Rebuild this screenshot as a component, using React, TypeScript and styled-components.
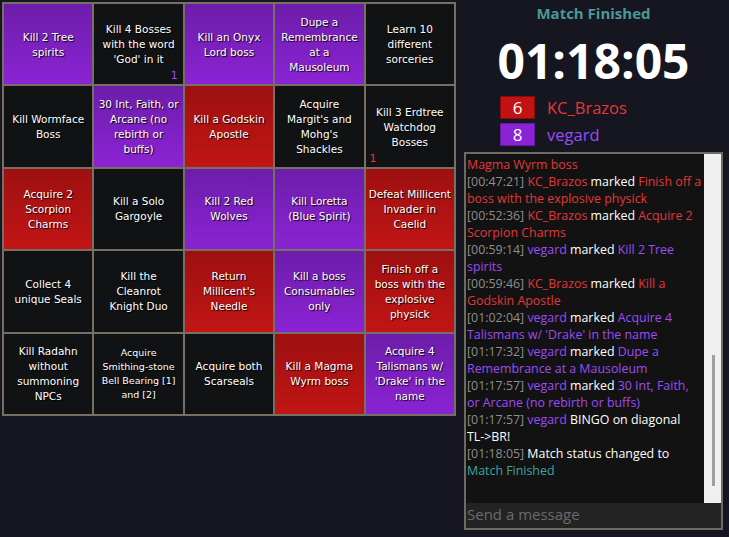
import React from 'react';
import styled, { createGlobalStyle, css } from 'styled-components';

type Team = 'red' | 'purple' | 'none';

interface IGoal {
    text: string;
    team: Team;
    small?: boolean;
    marker?: { team: Team; side: 'left' | 'right' };
}

const GlobalStyle = createGlobalStyle`
    html, body {
        margin: 0;
        padding: 0;
        background-color: #15161f;
        height: 100%;
    }
    * {
        box-sizing: border-box;
    }
`;

const teamFill = {
    red: css`
        background: linear-gradient(#9d1010, #c21515);
    `,
    purple: css`
        background: linear-gradient(#6c1daa, #8b23d4);
    `,
    none: css`
        background: #111213;
    `,
};

const teamText = {
    red: '#e23838',
    purple: '#9c4cf7',
    none: '#ffffff',
};

const Page = styled.div`
    display: flex;
    height: 537px;
    padding: 2px 0 0 2px;
`;

const Board = styled.div`
    display: grid;
    grid-template-columns: repeat(5, 1fr);
    grid-template-rows: repeat(5, 1fr);
    gap: 2px;
    padding: 2px;
    width: 454px;
    height: 414px;
    background-color: #776f63;
`;

const Cell = styled.div<{ $team: Team }>`
    position: relative;
    display: flex;
    align-items: center;
    justify-content: center;
    padding: 1px 2.8px 0;
    ${(p) => teamFill[p.$team]}
`;

const CellLabel = styled.div<{ $small?: boolean }>`
    font-family: 'DejaVu Sans', Verdana, sans-serif;
    font-size: ${(p) => (p.$small ? '9.5px' : '10.5px')};
    line-height: ${(p) => (p.$small ? '14px' : '15px')};
    color: #ffffff;
    text-align: center;
    white-space: pre-line;
    text-shadow: 1px 1px 1px #000;
`;

const Marker = styled.span<{ $team: Team; $side: 'left' | 'right' }>`
    position: absolute;
    bottom: 1px;
    ${(p) => (p.$side === 'left' ? 'left: 4px;' : 'right: 5px;')}
    font-family: 'DejaVu Sans', Verdana, sans-serif;
    font-size: 11px;
    line-height: 14px;
    color: ${(p) => teamText[p.$team]};
`;

const Side = styled.div`
    flex: 1;
    display: flex;
    flex-direction: column;
    align-items: stretch;
    padding: 0 6px 7px 8px;
    margin-top: -2px;
    font-family: 'Open Sans', 'Noto Sans', sans-serif;
`;

const Status = styled.div`
    padding-top: 3px;
    font-size: 15px;
    line-height: 20px;
    font-weight: 700;
    color: #4b9898;
    text-align: center;
`;

const Timer = styled.div`
    margin-top: 10px;
    font-size: 48px;
    line-height: 56px;
    font-weight: 700;
    color: #ffffff;
    text-align: center;
`;

const Scores = styled.div`
    display: flex;
    flex-direction: column;
    gap: 4px;
    margin-top: 7px;
    padding-left: 36px;
`;

const ScoreRow = styled.div`
    display: flex;
    align-items: center;
    gap: 12px;
`;

const ScoreBox = styled.div<{ $team: Team }>`
    width: 35px;
    height: 23px;
    display: flex;
    align-items: center;
    justify-content: center;
    font-size: 17px;
    color: #ffffff;
    background-color: ${(p) => (p.$team === 'red' ? '#c11313' : '#8a22d5')};
    border: 1px solid ${(p) => (p.$team === 'red' ? '#860c0c' : '#651aa3')};
`;

const ScoreName = styled.div<{ $team: Team }>`
    font-size: 16.5px;
    color: ${(p) => teamText[p.$team]};
`;

const ChatBox = styled.div`
    flex: 1;
    display: flex;
    flex-direction: column;
    margin-top: 6px;
    border: 2px solid #6f6a60;
    background-color: #121212;
    min-height: 0;
`;

const LogRow = styled.div`
    flex: 1;
    display: flex;
    min-height: 0;
`;

const Log = styled.div`
    flex: 1;
    display: flex;
    flex-direction: column;
    justify-content: flex-end;
    overflow: hidden;
    padding: 0 0 24px 1px;
    font-size: 12.4px;
    line-height: 17px;
    color: #ffffff;
`;

const Message = styled.div``;

const Stamp = styled.span`
    color: #8e8e8e;
`;

const Colored = styled.span<{ $team: Team | 'status' }>`
    color: ${(p) => (p.$team === 'status' ? '#3fa3a0' : teamText[p.$team])};
`;

const NoWrap = styled.span`
    white-space: nowrap;
`;

const Track = styled.div`
    width: 17px;
    display: flex;
    flex-direction: column;
    justify-content: flex-end;
    padding: 0 0 17px 8px;
    background-color: #f0f0f0;
`;

const Thumb = styled.div`
    width: 3px;
    height: 131px;
    background-color: #a0a0a0;
`;

const ChatInput = styled.input`
    height: 25px;
    border: none;
    outline: none;
    padding: 0 1px 3px;
    background-color: #232323;
    color: #ffffff;
    font-family: 'Open Sans', 'Noto Sans', sans-serif;
    font-size: 15px;

    &::placeholder {
        color: #6b6b6b;
    }
`;

const goals: IGoal[] = [
    { text: 'Kill 2 Tree spirits', team: 'purple' },
    { text: "Kill 4 Bosses with the word 'God' in it", team: 'none', marker: { team: 'purple', side: 'right' } },
    { text: 'Kill an Onyx Lord boss', team: 'purple' },
    { text: 'Dupe a Remembrance at a Mausoleum', team: 'purple' },
    { text: 'Learn 10 different sorceries', team: 'none' },
    { text: 'Kill Wormface Boss', team: 'none' },
    { text: '30 Int, Faith, or Arcane (no rebirth or\nbuffs)', team: 'purple' },
    { text: 'Kill a Godskin Apostle', team: 'red' },
    { text: "Acquire Margit's and Mohg's Shackles", team: 'none' },
    { text: 'Kill 3 Erdtree Watchdog Bosses', team: 'none', marker: { team: 'red', side: 'left' } },
    { text: 'Acquire 2 Scorpion Charms', team: 'red' },
    { text: 'Kill a Solo Gargoyle', team: 'none' },
    { text: 'Kill 2 Red Wolves', team: 'purple' },
    { text: 'Kill Loretta (Blue Spirit)', team: 'purple' },
    { text: 'Defeat Millicent Invader in Caelid', team: 'red' },
    { text: 'Collect 4 unique Seals', team: 'none' },
    { text: 'Kill the Cleanrot\nKnight Duo', team: 'none' },
    { text: "Return Millicent's Needle", team: 'red' },
    { text: 'Kill a boss Consumables only', team: 'purple' },
    { text: 'Finish off a boss with the explosive physick', team: 'red' },
    { text: 'Kill Radahn without summoning NPCs', team: 'none' },
    { text: 'Acquire Smithing-stone Bell Bearing [1] and [2]', team: 'none', small: true },
    { text: 'Acquire both Scarseals', team: 'none' },
    { text: 'Kill a Magma Wyrm boss', team: 'red' },
    { text: "Acquire 4 Talismans w/ 'Drake' in the name", team: 'purple' },
];

const players: Record<string, Team> = { KC_Brazos: 'red', vegard: 'purple' };

const marks = [
    ['00:44:12', 'KC_Brazos', 'Kill a Magma Wyrm boss'],
    ['00:47:21', 'KC_Brazos', 'Finish off a boss with the explosive physick'],
    ['00:52:36', 'KC_Brazos', 'Acquire 2 Scorpion Charms'],
    ['00:59:14', 'vegard', 'Kill 2 Tree spirits'],
    ['00:59:46', 'KC_Brazos', 'Kill a Godskin Apostle'],
    ['01:02:04', 'vegard', "Acquire 4 Talismans w/ 'Drake' in the name"],
    ['01:17:32', 'vegard', 'Dupe a Remembrance at a Mausoleum'],
    ['01:17:57', 'vegard', '30 Int, Faith, or Arcane (no rebirth or buffs)'],
];

const App: React.FC = () => {
    return (
        <Page>
            <GlobalStyle />
            <Board>
                {goals.map((goal, index) => (
                    <Cell key={index} $team={goal.team}>
                        <CellLabel $small={goal.small}>{goal.text}</CellLabel>
                        {goal.marker && (
                            <Marker $team={goal.marker.team} $side={goal.marker.side}>
                                1
                            </Marker>
                        )}
                    </Cell>
                ))}
            </Board>
            <Side>
                <Status>Match Finished</Status>
                <Timer>01:18:05</Timer>
                <Scores>
                    <ScoreRow>
                        <ScoreBox $team="red">6</ScoreBox>
                        <ScoreName $team="red">KC_Brazos</ScoreName>
                    </ScoreRow>
                    <ScoreRow>
                        <ScoreBox $team="purple">8</ScoreBox>
                        <ScoreName $team="purple">vegard</ScoreName>
                    </ScoreRow>
                </Scores>
                <ChatBox>
                    <LogRow>
                        <Log>
                            {marks.map(([time, player, goal], index) => (
                                <Message key={index}>
                                    <Stamp>[{time}]</Stamp> <Colored $team={players[player]}>{player}</Colored> marked{' '}
                                    <Colored $team={players[player]}>{goal}</Colored>
                                </Message>
                            ))}
                            <Message>
                                <Stamp>[01:17:57]</Stamp> <Colored $team="purple">vegard</Colored> BINGO on diagonal{' '}
                                <NoWrap>TL-&gt;BR!</NoWrap>
                            </Message>
                            <Message>
                                <Stamp>[01:18:05]</Stamp> Match status changed to <Colored $team="status">Match Finished</Colored>
                            </Message>
                        </Log>
                        <Track>
                            <Thumb />
                        </Track>
                    </LogRow>
                    <ChatInput placeholder="Send a message" />
                </ChatBox>
            </Side>
        </Page>
    );
};

export default App;
